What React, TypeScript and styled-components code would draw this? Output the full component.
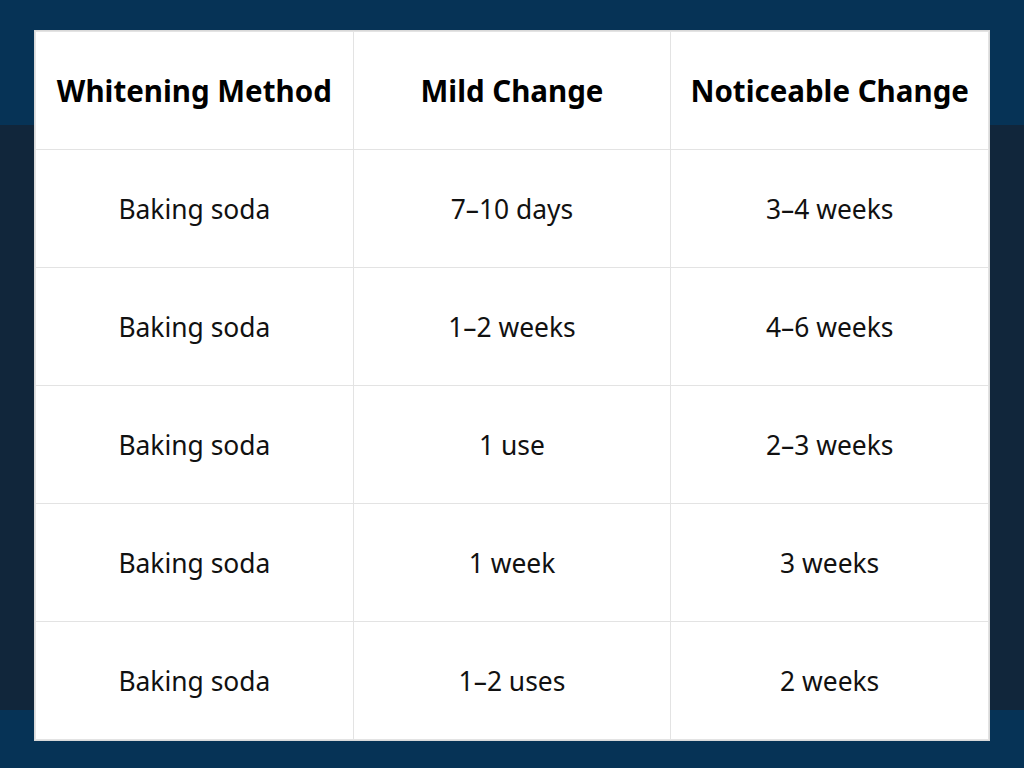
import styled, { createGlobalStyle } from "styled-components";

const GlobalStyle = createGlobalStyle`
  html, body {
    margin: 0;
    padding: 0;
  }
  body {
    font-family: "Noto Sans", "Liberation Sans", sans-serif;
  }
`;

const rows = [
  { method: "Baking soda", mild: "7–10 days", noticeable: "3–4 weeks" },
  { method: "Baking soda", mild: "1–2 weeks", noticeable: "4–6 weeks" },
  { method: "Baking soda", mild: "1 use", noticeable: "2–3 weeks" },
  { method: "Baking soda", mild: "1 week", noticeable: "3 weeks" },
  { method: "Baking soda", mild: "1–2 uses", noticeable: "2 weeks" },
];

export default function App() {
  return (
    <>
      <GlobalStyle />
      <Page>
        <Table>
          <thead>
            <tr>
              <HeadCell>Whitening Method</HeadCell>
              <HeadCell>Mild Change</HeadCell>
              <HeadCell>Noticeable Change</HeadCell>
            </tr>
          </thead>
          <tbody>
            {rows.map((r, i) => (
              <tr key={i}>
                <Cell>{r.method}</Cell>
                <Cell>{r.mild}</Cell>
                <Cell>{r.noticeable}</Cell>
              </tr>
            ))}
          </tbody>
        </Table>
      </Page>
    </>
  );
}

const Page = styled.div`
  width: 1024px;
  height: 768px;
  box-sizing: border-box;
  padding: 31px 35px 29px;
  background: linear-gradient(
    to bottom,
    #063356 0,
    #063356 125px,
    #11263b 125px,
    #11263b 710px,
    #063356 710px
  );
`;

const Table = styled.table`
  width: 954px;
  border-collapse: collapse;
  table-layout: fixed;
  background: #ffffff;
  box-shadow: 0 0 0 1px #d9d9d9;
`;

const HeadCell = styled.th`
  height: 117px;
  padding: 0;
  border: 1px solid #e3e3e3;
  font-size: 29.5px;
  font-weight: 700;
  color: #000;
  text-align: center;
  vertical-align: middle;
`;

const Cell = styled.td`
  height: 117px;
  padding: 0;
  border: 1px solid #e3e3e3;
  font-size: 26.4px;
  font-weight: 400;
  color: #111;
  text-align: center;
  vertical-align: middle;
`;
